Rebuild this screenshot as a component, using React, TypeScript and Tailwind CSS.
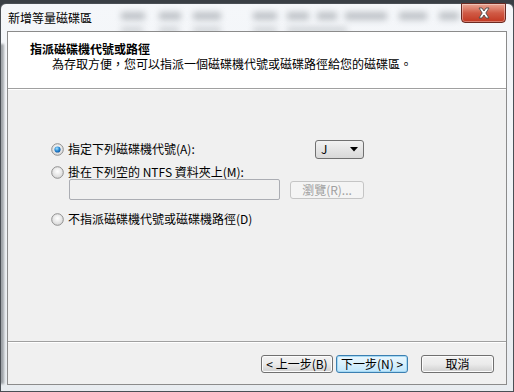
import React from "react";

const font = { fontFamily: '"Noto Sans CJK TC", "Noto Sans", sans-serif' };

function Radio({ checked }: { checked?: boolean }) {
  return (
    <svg width="13" height="13" viewBox="0 0 13 13" className="shrink-0">
      <defs>
        <radialGradient id={checked ? "rgc" : "rgu"} cx="50%" cy="40%" r="60%">
          <stop offset="0%" stopColor="#ffffff" />
          <stop offset="100%" stopColor="#d6d6d6" />
        </radialGradient>
        <radialGradient id="dot" cx="40%" cy="35%" r="70%">
          <stop offset="0%" stopColor="#a6e3ff" />
          <stop offset="55%" stopColor="#2a8ad4" />
          <stop offset="100%" stopColor="#0b4f9a" />
        </radialGradient>
      </defs>
      <circle cx="6.5" cy="6.5" r="5.8" fill={`url(#${checked ? "rgc" : "rgu"})`} stroke="#8f8f8f" strokeWidth="1" />
      {checked && <circle cx="6.5" cy="6.5" r="3.1" fill="url(#dot)" />}
    </svg>
  );
}

function Btn({ children, def, disabled, w }: { children: React.ReactNode; def?: boolean; disabled?: boolean; w: string }) {
  return (
    <div
      className={`${w} h-[18px] rounded-[3px] border flex items-center justify-center text-[12px] leading-[14px] ${
        disabled
          ? "border-[#c5c5c5] bg-[#f4f4f4] text-[#a0a0a0]"
          : def
          ? "border-[#3c7fb1] bg-gradient-to-b from-[#eaf6fd] via-[#d9f0fc] to-[#bee6fd] text-black shadow-[inset_0_0_0_1px_#a5d9f3]"
          : "border-[#707070] bg-gradient-to-b from-[#f2f2f2] via-[#ebebeb] to-[#cfcfcf] text-black shadow-[inset_0_0_0_1px_#fcfcfc]"
      }`}
    >
      {children}
    </div>
  );
}

export default function App() {
  return (
    <div className="w-[514px] h-[392px] bg-[#3a3f45] overflow-hidden" style={font}>
      <div className="relative mt-[3px] h-[389px] rounded-tl-[6px] rounded-tr-[6px] border border-[#4a4f55] bg-gradient-to-b from-[#f5f7fa] via-[#f0f3f6] to-[#e8ecf0] flex flex-col">
        {/* blurred background content seen through glass */}
        <div className="absolute inset-0 overflow-hidden pointer-events-none">
          <div className="absolute left-[120px] top-[8px] w-[24px] h-[8px] bg-[#9aa0a6] blur-[3px] opacity-60" />
          <div className="absolute left-[158px] top-[8px] w-[22px] h-[8px] bg-[#9aa0a6] blur-[3px] opacity-60" />
          <div className="absolute left-[192px] top-[8px] w-[28px] h-[8px] bg-[#9aa0a6] blur-[3px] opacity-60" />
          <div className="absolute left-[252px] top-[8px] w-[24px] h-[8px] bg-[#9aa0a6] blur-[3px] opacity-60" />
          <div className="absolute left-[286px] top-[8px] w-[22px] h-[8px] bg-[#9aa0a6] blur-[3px] opacity-60" />
          <div className="absolute left-[316px] top-[8px] w-[20px] h-[8px] bg-[#9aa0a6] blur-[3px] opacity-60" />
          <div className="absolute left-[344px] top-[8px] w-[42px] h-[8px] bg-[#9aa0a6] blur-[3px] opacity-60" />
          <div className="absolute left-[398px] top-[8px] w-[28px] h-[8px] bg-[#9aa0a6] blur-[3px] opacity-60" />
          <div className="absolute left-[438px] top-[8px] w-[20px] h-[8px] bg-[#9aa0a6] blur-[3px] opacity-60" />
          <div className="absolute left-[120px] top-[23px] w-[22px] h-[6px] bg-[#a8adb2] blur-[3px] opacity-50" />
          <div className="absolute left-[158px] top-[23px] w-[20px] h-[6px] bg-[#a8adb2] blur-[3px] opacity-50" />
          <div className="absolute left-[192px] top-[23px] w-[28px] h-[6px] bg-[#a8adb2] blur-[3px] opacity-50" />
          <div className="absolute left-[252px] top-[23px] w-[24px] h-[6px] bg-[#a8adb2] blur-[3px] opacity-50" />
          <div className="absolute left-[286px] top-[23px] w-[60px] h-[6px] bg-[#a8adb2] blur-[3px] opacity-50" />
          <div className="absolute left-[-2px] top-[40px] w-[5px] h-[340px] bg-[#6b7076] blur-[1px] opacity-60" />
        </div>

        {/* title bar */}
        <div className="relative h-[27px] flex items-center pl-[7px]">
          <span className="text-[12px] leading-[14px] text-black">新增等量磁碟區</span>
          <div className="absolute right-[7px] top-[-1px] w-[45px] h-[20px] rounded-b-[4px] border border-[#6b2a22] bg-gradient-to-b from-[#e8a493] via-[#d05a45] to-[#c2361f] flex items-center justify-center shadow-[inset_0_0_0_1px_rgba(255,255,255,0.35)]">
            <svg width="14" height="12" viewBox="0 0 14 12">
              <path d="M2 1 L5 1 L7 4 L9 1 L12 1 L8.8 6 L12 11 L9 11 L7 8 L5 11 L2 11 L5.2 6 Z" fill="#ffffff" stroke="#4b4b4b" strokeWidth="0.9" strokeLinejoin="round" />
            </svg>
          </div>
        </div>

        {/* client area */}
        <div className="relative mx-[6px] h-[354px] border border-[#8b8b8b] bg-[#f0f0f0] flex flex-col">
          <div className="h-[57px] bg-white border-b border-[#a0a0a0] pt-[9px]">
            <div className="pl-[22px] text-[12px] leading-[16px] font-bold text-black">指派磁碟機代號或路徑</div>
            <div className="pl-[44px] text-[12px] leading-[14px] text-black">為存取方便，您可以指派一個磁碟機代號或磁碟路徑給您的磁碟區。</div>
          </div>
          <div className="flex-1 border-t border-white pl-[43px] pt-[49px] text-[12px] leading-[14px] text-black">
            <div className="flex items-center h-[20px]">
              <div className="flex items-center gap-[4px] w-[264px]">
                <Radio checked />
                <span>指定下列磁碟機代號(A):</span>
              </div>
              <div className="w-[49px] h-[19px] rounded-[3px] border border-[#707070] bg-gradient-to-b from-[#f2f2f2] to-[#d8d8d8] flex items-center justify-between pl-[5px] pr-[5px]">
                <span className="text-[12px]">J</span>
                <svg width="8" height="5" viewBox="0 0 8 5"><path d="M0 0 L8 0 L4 4.5 Z" fill="#000" /></svg>
              </div>
            </div>
            <div className="flex items-center gap-[4px] h-[14px] mt-[6px]">
              <Radio />
              <span>掛在下列空的 NTFS 資料夾上(M):</span>
            </div>
            <div className="flex items-center pl-[18px] gap-[10px]">
              <div className="w-[211px] h-[21px] border border-[#abadb3] rounded-[2px] bg-[#f0f0f0]" />
              <Btn disabled w="w-[74px]">瀏覽(R)...</Btn>
            </div>
            <div className="flex items-center gap-[4px] h-[14px] mt-[12px]">
              <Radio />
              <span>不指派磁碟機代號或磁碟機路徑(D)</span>
            </div>
          </div>
          <div className="h-[43px] border-t border-[#a0a0a0] shadow-[inset_0_1px_0_#ffffff] flex items-start pt-[13px] pl-[253px]">
            <Btn w="w-[72px]">&lt; 上一步(B)</Btn>
            <div className="w-[3px]" />
            <Btn def w="w-[72px]">下一步(N) &gt;</Btn>
            <div className="w-[13px]" />
            <Btn w="w-[73px]">取消</Btn>
          </div>
        </div>
      </div>
    </div>
  );
}
